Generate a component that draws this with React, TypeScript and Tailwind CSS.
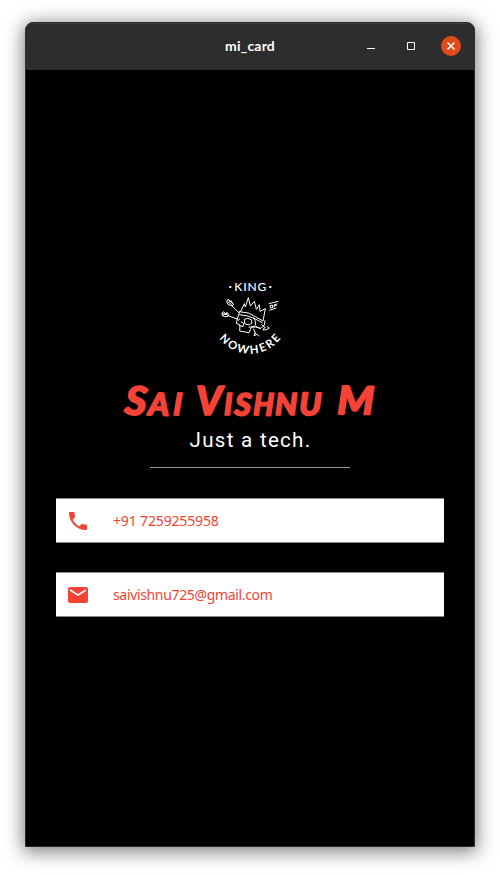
import React from "react";

const letters = [
  { c: "S", x: 124, y: 414, s: 40, r: 5, w: 1.04 },
  { c: "A", x: 148, y: 415, s: 31, r: 2, w: 1.03 },
  { c: "I", x: 173, y: 415, s: 31, r: 3, w: 0.95 },
  { c: "V", x: 196, y: 415, s: 40, r: 0, w: 1 },
  { c: "I", x: 224, y: 415, s: 31, r: 0, w: 0.95 },
  { c: "S", x: 234, y: 415, s: 31, r: 4, w: 1.02 },
  { c: "H", x: 253, y: 415, s: 31, r: 2, w: 0.92 },
  { c: "N", x: 275, y: 415, s: 31, r: 0, w: 1 },
  { c: "U", x: 299, y: 415, s: 31, r: 1, w: 1.03 },
  { c: "M", x: 337, y: 414, s: 39, r: 1, w: 1.07 },
];

function Name() {
  return (
    <svg viewBox="110 375 280 50" className="h-[50px] w-[280px] overflow-visible" aria-label="Sai Vishnu M">
      <g fill="#f44336" stroke="#f44336" strokeWidth="1.6" strokeLinejoin="round" fontFamily="Lato, sans-serif" fontWeight="900" fontStyle="italic">
        {letters.map((l, i) => (
          <text key={i} fontSize={l.s} transform={`translate(${l.x} ${l.y}) rotate(${l.r}) scale(${l.w} 1)`}>{l.c}</text>
        ))}
      </g>
    </svg>
  );
}

function Emblem() {
  return (
    <svg viewBox="0 0 270 285" className="h-[95px] w-[90px]" fill="none" stroke="white" strokeWidth="3" strokeLinejoin="round">
      <defs><path id="arc" d="M19 135A116 116 0 0 0 251 135" /></defs>
      <g fill="white" stroke="none" fontFamily="Lato, sans-serif">
        <text x="88" y="63" fontSize="36" fontWeight="500" textLength="96">KING</text>
        <text fontWeight="700" fontSize="34"><textPath href="#arc" startOffset="50%" textAnchor="middle" textLength="213">NOWHERE</textPath></text>
      </g>
      <path d="M73 51h6M193 51h6" strokeWidth="6" />
      <path d="M108 123L118 101L121 111L130 83L136 108L148 94L154 118L163 104L165 124L181 116L174 153L151 140L130 129L103 125ZM103 134L129 138L151 147L172 158M104 125L98 144L94 160L105 165L104 183L132 188L139 172L151 171L168 175L178 165L180 151M105 146L98 152M118 148L128 145L139 149L141 159L132 165L119 161ZM146 142L150 151L152 165M103 166L114 170L116 160L108 155M131 172L151 168L166 176M145 176L152 192M169 163L183 175M81 108L102 128M70 137L96 147" />
      <path d="M66 91L71 88L73 94L80 93L81 99L86 102L81 108L69 103L65 95ZM68 95L80 104M72 90L83 101M51 129L56 125L60 131L66 128L71 133L69 139L59 140L51 136ZM52 131L69 135M54 136L68 129M151 188L147 197L157 193L162 199M178 173L174 180L185 179L193 174L186 169M191 101L220 94M193 121L214 114M195 107L202 105L203 113L196 114ZM208 104L217 102M208 104L207 112M207 108L215 106" />
    </svg>
  );
}

function Card({ icon, children }: { icon: string; children: React.ReactNode }) {
  return (
    <div className="flex h-[45px] w-[388px] items-center border-y border-[#858b8b] bg-white pl-[10px] text-[14px] text-[#f44336]">
      <svg viewBox="0 0 24 24" className="mr-[23px] size-6 shrink-0" fill="currentColor"><path d={icon} /></svg>
      {children}
    </div>
  );
}

export default function App() {
  return (
    <div className="h-[875px] w-[500px] overflow-hidden bg-white px-[25px] pt-[22px] font-['Noto_Sans',sans-serif]">
      <div className="flex h-[825px] w-[450px] flex-col overflow-hidden rounded-t-[8px] border border-[#302b2c] bg-black shadow-[0_3px_18px_2px_rgba(0,0,0,0.5)]">
        <header className="relative flex h-[47px] shrink-0 items-center justify-center border-t border-[#3a3a3a] bg-[#2d2d2d]">
          <span className="-mt-[3px] font-['Lato',sans-serif] text-[14px] font-bold tracking-[0.2px] text-white">mi_card</span>
          <svg viewBox="0 0 110 24" className="absolute right-[7px] top-[10px] h-6 w-[110px]" fill="none">
            <path d="M10 14.5h8" stroke="white" />
            <path d="M50.5 8.5h7v7h-7z" stroke="white" />
            <circle cx="94" cy="12" r="10" fill="#e04b19" />
            <path d="M90.5 8.5l7 7m0-7l-7 7" stroke="white" strokeWidth="1.5" />
          </svg>
        </header>
        <main className="flex flex-col items-center pt-[200px]">
          <Emblem />
          <div className="mt-[10px] h-[50px]"><Name /></div>
          <p className="mt-[1px] h-[28px] whitespace-nowrap pl-px font-['Roboto',sans-serif] text-[20.5px] leading-[28px] tracking-[1.3px] text-white">Just a tech.</p>
          <div className="mt-[13px] h-px w-[200px] bg-[#929898]" />
          <div className="mt-[30px] flex flex-col gap-[29px]">
            <Card icon="M6.62 10.79c1.44 2.83 3.76 5.14 6.59 6.59l2.2-2.2c.27-.27.67-.36 1.02-.24 1.12.37 2.33.57 3.57.57.55 0 1 .45 1 1V20c0 .55-.45 1-1 1-9.39 0-17-7.61-17-17 0-.55.45-1 1-1h3.5c.55 0 1 .45 1 1 0 1.25.2 2.45.57 3.57.11.35.03.74-.25 1.02l-2.2 2.2z"><span className="tracking-[-0.15px]">+91 7259255958</span></Card>
            <Card icon="M20 4H4c-1.1 0-1.99.9-1.99 2L2 18c0 1.1.9 2 2 2h16c1.1 0 2-.9 2-2V6c0-1.1-.9-2-2-2zm0 4l-8 5-8-5V6l8 5 8-5v2z"><span className="tracking-[-0.34px]">saivishnu725@gmail.com</span></Card>
          </div>
        </main>
      </div>
    </div>
  );
}
